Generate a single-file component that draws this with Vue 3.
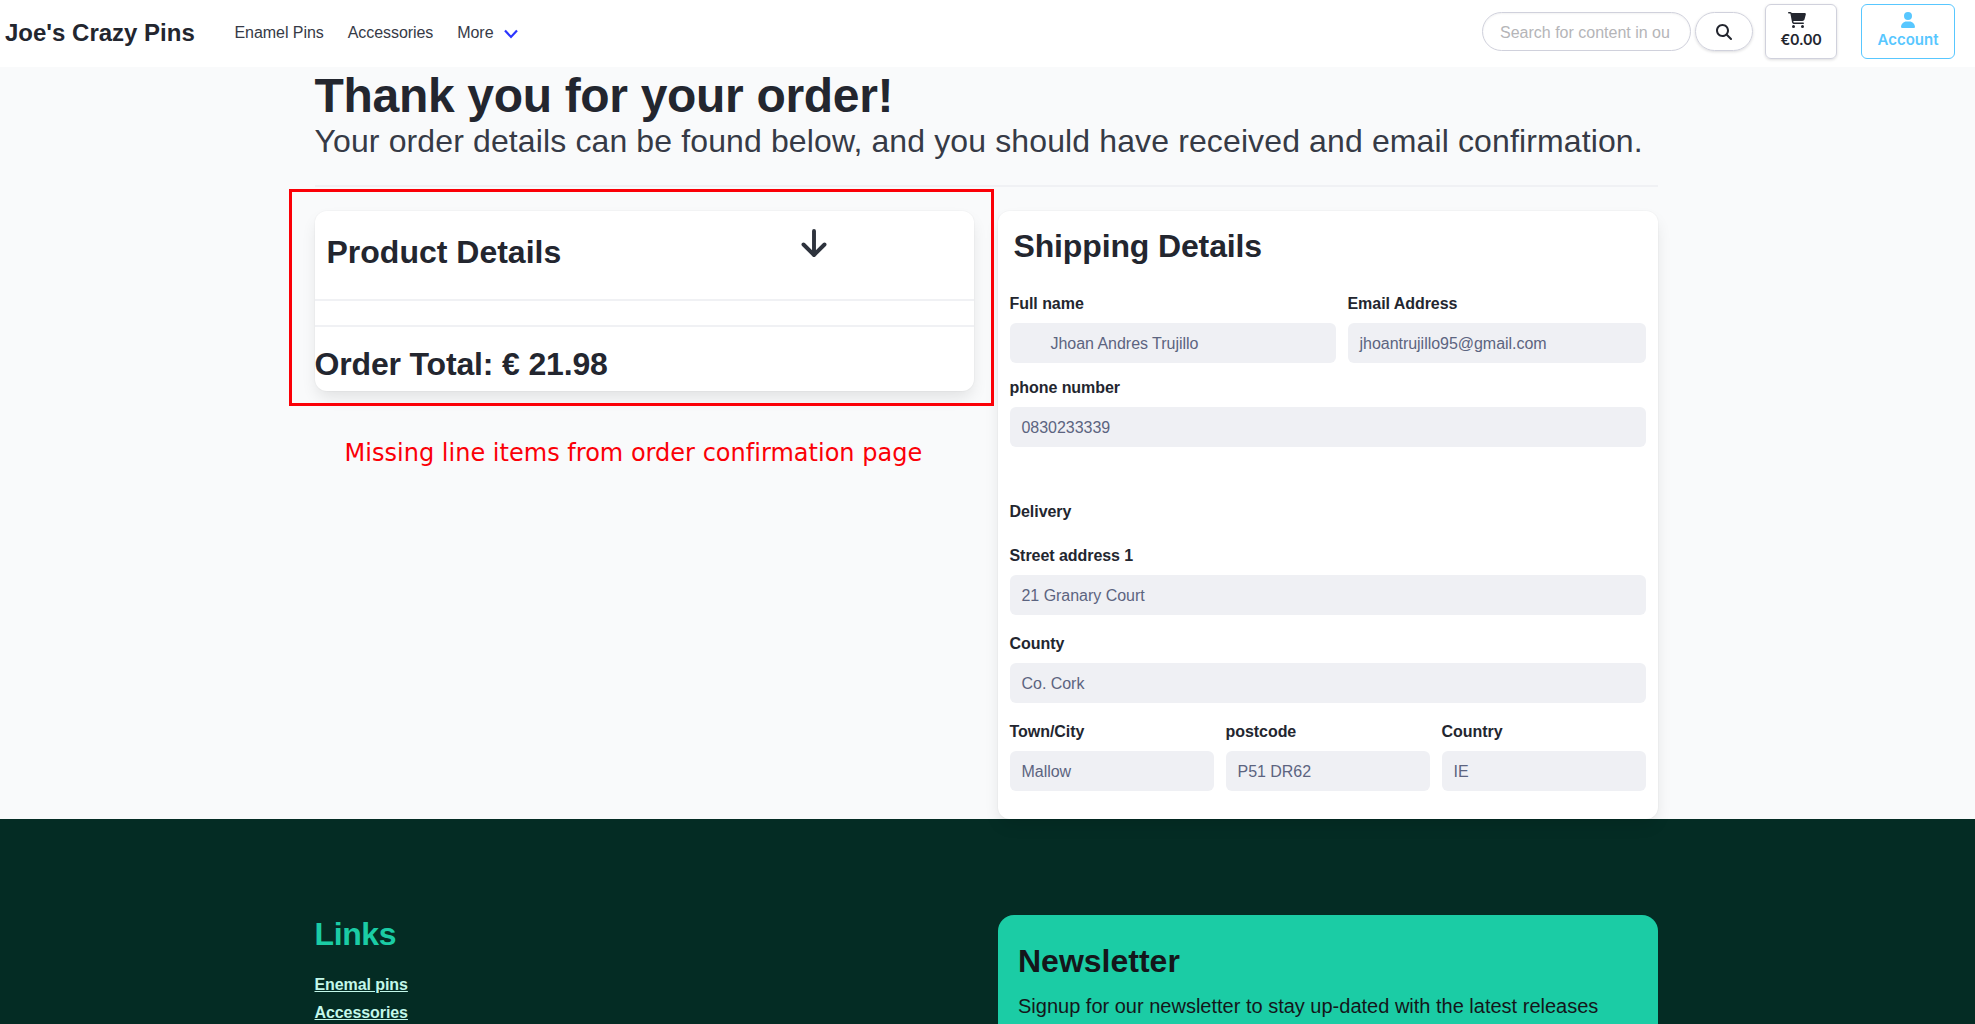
<script setup>
const nav = ['Enamel Pins', 'Accessories', 'More']
const links = ['Enemal pins', 'Accessories']
const rows = [
  {
    cls: 'row-contact',
    fields: [
      { label: 'Full name', value: 'Jhoan Andres Trujillo', cls: 'indent' },
      { label: 'Email Address', value: 'jhoantrujillo95@gmail.com' },
    ],
  },
  { cls: 'row-phone', fields: [{ label: 'phone number', value: '0830233339' }] },
  { cls: 'row-heading', fields: [{ label: 'Delivery' }] },
  { cls: 'row', fields: [{ label: 'Street address 1', value: '21 Granary Court' }] },
  { cls: 'row', fields: [{ label: 'County', value: 'Co. Cork' }] },
  {
    cls: 'row',
    fields: [
      { label: 'Town/City', value: 'Mallow' },
      { label: 'postcode', value: 'P51 DR62' },
      { label: 'Country', value: 'IE' },
    ],
  },
]
</script>

<template>
  <div class="page">
    <header class="navbar">
      <div class="brand">Joe's Crazy Pins</div>
      <nav class="menu">
        <a v-for="item in nav" :key="item">{{ item }}</a>
        <svg class="chevron" width="14" height="10" viewBox="0 0 14 10"><path d="M1 1.500 7 8 13 1.500" fill="none" stroke="#2b35ff" stroke-width="2.200" /></svg>
      </nav>
      <div class="actions">
        <div class="search">Search for content in ou</div>
        <div class="btn search-btn">
          <svg width="16" height="16" viewBox="0 0 512 512" fill="currentColor"><path d="M416 208c0 45.900-14.900 88.300-40 122.700L502.600 457.400c12.500 12.500 12.500 32.800 0 45.300s-32.800 12.500-45.300 0L330.700 376c-34.400 25.200-76.800 40-122.700 40C93.100 416 0 322.900 0 208S93.100 0 208 0S416 93.100 416 208zM208 352a144 144 0 1 0 0-288 144 144 0 1 0 0 288z" /></svg>
        </div>
        <div class="btn cart">
          <svg width="18" height="16" viewBox="0 0 576 512" fill="currentColor"><path d="M0 24C0 10.700 10.700 0 24 0H69.500c22 0 41.500 12.800 50.600 32h411c26.300 0 45.500 25 38.600 50.400l-41 152.300c-8.500 31.400-37 53.300-69.500 53.300H170.700l5.400 28.500c2.200 11.300 12.100 19.500 23.600 19.500H488c13.300 0 24 10.700 24 24s-10.700 24-24 24H199.700c-34.600 0-64.300-24.600-70.700-58.500L77.400 54.500c-.7-3.800-4-6.500-7.900-6.500H24C10.700 48 0 37.300 0 24zM128 464a48 48 0 1 1 96 0 48 48 0 1 1-96 0zm336-48a48 48 0 1 1 0 96 48 48 0 1 1 0-96z" /></svg>
          <span>€0.00</span>
        </div>
        <div class="btn account">
          <svg width="14" height="16" viewBox="0 0 448 512" fill="currentColor"><path d="M224 256A128 128 0 1 0 224 0a128 128 0 1 0 0 256zm-45.700 48C79.800 304 0 383.800 0 482.300C0 498.700 13.300 512 29.700 512H418.300c16.400 0 29.700-13.300 29.700-29.700C448 383.800 368.200 304 269.700 304H178.300z" /></svg>
          <span>Account</span>
        </div>
      </div>
    </header>

    <main class="container">
      <h1>Thank you for your order!</h1>
      <p class="subtitle">Your order details can be found below, and you should have received and email confirmation.</p>
      <hr />
      <div class="columns">
        <div class="left">
          <section class="card product">
            <div class="product-head">
              <h2>Product Details</h2>
              <svg width="26" height="28" viewBox="0 0 26 28"><path d="M13 2v23M2.500 15.500 13 26 23.500 15.500" fill="none" stroke="#2e333d" stroke-width="3.900" stroke-linecap="round" stroke-linejoin="round" /></svg>
            </div>
            <div class="line-items"></div>
            <h2 class="total">Order Total: € 21.98</h2>
            <div class="highlight"></div>
          </section>
          <p class="note">Missing line items from order confirmation page</p>
        </div>
        <section class="card shipping">
          <h2>Shipping Details</h2>
          <div v-for="(row, i) in rows" :key="i" class="fields" :class="row.cls">
            <div v-for="f in row.fields" :key="f.label" class="field">
              <label>{{ f.label }}</label>
              <div v-if="f.value" class="input" :class="f.cls">{{ f.value }}</div>
            </div>
          </div>
        </section>
      </div>
    </main>

    <footer class="footer">
      <div class="footer-inner">
        <div class="footer-links">
          <h2>Links</h2>
          <a v-for="link in links" :key="link">{{ link }}</a>
        </div>
        <div class="newsletter">
          <h2>Newsletter</h2>
          <p>Signup for our newsletter to stay up-dated with the latest releases</p>
        </div>
      </div>
    </footer>
  </div>
</template>

<style>
body {
  margin: 0;
}
</style>

<style scoped>
.page {
  width: 1975px;
  height: 1024px;
  overflow: hidden;
  background: #f9fafb;
  color: #23262f;
  font-family: "Liberation Sans", Arial, sans-serif;
  font-size: 16px;
  line-height: 24px;
  display: flex;
  flex-direction: column;
}
.page * {
  box-sizing: border-box;
}
h1, h2, p {
  margin: 0;
}
h2 {
  font-size: 32px;
  line-height: 36px;
  white-space: nowrap;
}
.navbar {
  height: 67px;
  flex: none;
  background: #fff;
  display: flex;
  align-items: flex-start;
}
.brand {
  width: 234.500px;
  padding: 20px 0 0 5px;
  font-size: 24px;
  line-height: 26px;
  font-weight: 700;
  white-space: nowrap;
}
.menu {
  display: flex;
  gap: 24px;
  padding-top: 21px;
  color: #363a46;
  letter-spacing: -0.060px;
}
.chevron {
  margin: 8px 0 0 -13px;
}
.actions {
  margin-left: auto;
  display: flex;
  padding: 4px 20px 0 0;
}
.search {
  width: 209px;
  height: 39px;
  margin: 8px 4px 0 0;
  padding: 9px 0 0 17px;
  border: 1px solid #d0d1dc;
  border-radius: 20px;
  box-shadow: inset 0 1px 2px rgba(10, 10, 10, 0.05);
  color: #b5b5b8;
  line-height: 22px;
  white-space: nowrap;
}
.btn {
  border: 1px solid #d0d1dc;
  display: flex;
  flex-direction: column;
  align-items: center;
  box-shadow: 0 1px 3px rgba(20, 20, 30, 0.15);
}
.search-btn {
  width: 58px;
  height: 39px;
  margin: 8px 12px 0 0;
  border-radius: 20px;
  justify-content: center;
}
.cart,
.account {
  height: 55px;
  border-radius: 6px;
  padding-top: 7px;
  font: 600 15px/24px Inter, sans-serif;
}
.cart {
  width: 72px;
  margin-right: 24px;
  font-size: 14.500px;
}
.cart svg {
  margin-left: -8px;
}
.cart span {
  letter-spacing: -0.300px;
}
.account {
  width: 94px;
  color: #58c7ff;
  border-color: #58c7ff;
  box-shadow: none;
}
.container {
  width: 1343px;
  margin-left: 314.500px;
  height: 752px;
  flex: none;
  position: relative;
}
h1 {
  font-size: 48px;
  line-height: 54px;
  padding-top: 2px;
  letter-spacing: -0.320px;
  white-space: nowrap;
}
.subtitle {
  font-size: 32px;
  line-height: 36px;
  padding-bottom: 3px;
  letter-spacing: 0.124px;
  color: #363a46;
  white-space: nowrap;
}
hr {
  margin: 23px 0 24px;
  height: 2px;
  border: 0;
  background: #f0f1f4;
}
.columns {
  display: flex;
  gap: 24px;
}
.left,
.shipping {
  width: 659.500px;
}
.card {
  background: #fff;
  border-radius: 12px;
  box-shadow: 0 8px 16px -2px rgba(10, 10, 10, 0.1), 0 0 0 1px rgba(10, 10, 10, 0.02);
}
.product {
  height: 180px;
  position: relative;
}
.product-head {
  height: 88px;
  padding: 18px 147px 0 12px;
  display: flex;
  justify-content: space-between;
}
.product-head h2 {
  padding-top: 5px;
}
.line-items {
  height: 28px;
  border: solid #f0f1f4;
  border-width: 2px 0;
}
.total {
  padding-top: 19px;
  letter-spacing: -0.160px;
}
.highlight {
  position: absolute;
  left: -25.500px;
  top: -22px;
  width: 705px;
  height: 217px;
  border: 3px solid #fb0007;
}
.note {
  margin: 48px 0 0 30px;
  font: 24px/28px "DejaVu Sans", sans-serif;
  letter-spacing: 0.020px;
  color: #fb0007;
  white-space: nowrap;
}
.shipping {
  height: 608px;
  padding: 17px 12px 0 11.500px;
}
.shipping h2 {
  padding: 0 0 27px 4px;
  letter-spacing: -0.140px;
}
.fields {
  display: flex;
  gap: 12px;
}
.field {
  flex: 1;
}
label {
  display: block;
  font-weight: 700;
  padding-top: 1px;
  margin-bottom: 7px;
  letter-spacing: -0.050px;
}
.input {
  height: 40px;
  padding: 9px 12px 7px;
  background: #eff0f4;
  border-radius: 6px;
  color: #5c6480;
  letter-spacing: -0.030px;
  white-space: nowrap;
}
.indent {
  padding-left: 41px;
}
.row-contact .field:first-child {
  flex: 0 0 326px;
}
.row-phone {
  margin: 12px 0 52px;
}
.row-heading {
  margin-bottom: 12px;
}
.row {
  margin-bottom: 16px;
}
.footer {
  flex: 1;
  background: #042c24;
}
.footer-inner {
  width: 1343px;
  margin-left: 314.500px;
  padding-top: 96px;
  display: flex;
  gap: 24px;
}
.footer-links {
  width: 659.500px;
  display: flex;
  flex-direction: column;
  align-items: flex-start;
}
.footer-links h2 {
  color: #1bcca5;
  padding-top: 1px;
  margin-bottom: 19px;
  letter-spacing: -0.400px;
}
.footer-links a {
  color: #c3f8ea;
  font-weight: 700;
  line-height: 28px;
  letter-spacing: -0.080px;
  text-decoration: underline;
}
.newsletter {
  width: 659.500px;
  height: 200px;
  padding: 28px 20px;
  border-radius: 16px;
  background: #1bcca5;
  color: #14161a;
}
.newsletter p {
  margin-top: 12px;
  font-size: 20px;
  line-height: 30px;
  white-space: nowrap;
}
</style>
